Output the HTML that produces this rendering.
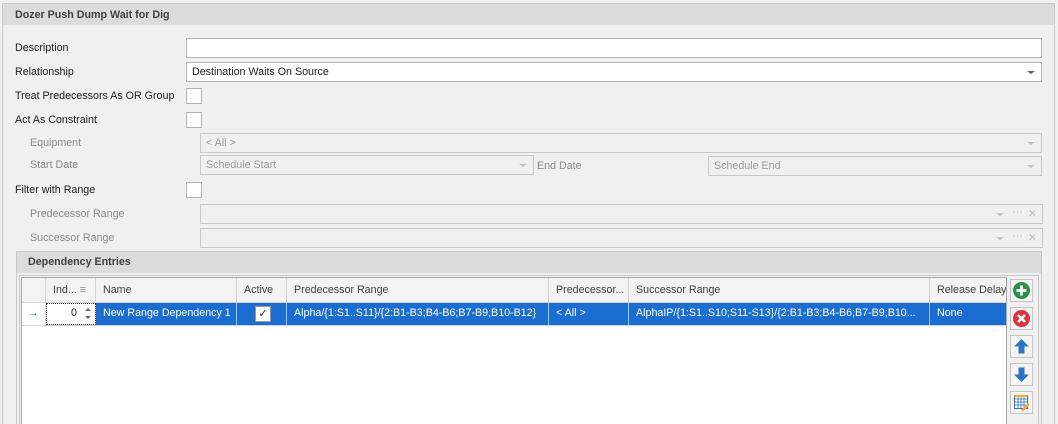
<!DOCTYPE html>
<html><head><style>
body{margin:0;width:1058px;height:424px;background:#f0f0f0;font-family:"Liberation Sans",sans-serif;font-size:10.7px;color:#202020;position:relative;overflow:hidden}
.a{position:absolute;white-space:nowrap}
.box{position:absolute;border:1px solid #b4b4b4;background:#fff;box-sizing:border-box}
.dis{background:#f0f0f0;border-color:#c8c8c8;color:#9a9a9a}
.lbl{position:absolute;white-space:nowrap;line-height:14px}
.sub{color:#8a8a8a}
.arr{position:absolute;right:6px;top:8px;width:0;height:0;border-left:4px solid transparent;border-right:4px solid transparent;border-top:3px solid #606060}
.dis .arr{border-top-color:#c0c0c0}
.cell{position:absolute;top:0;height:100%;box-sizing:border-box;border-right:1px solid #d4d4d4;padding-left:7px;line-height:24px;overflow:hidden;white-space:nowrap}
.btn{position:absolute;left:1010px;width:23px;height:23px;box-sizing:border-box;border:1px solid #c4c4c4;background:#f4f4f4}
.btn svg{position:absolute;left:0;top:0}
</style></head><body>
<div class="a" style="left:2px;top:3px;width:1053px;height:421px;border:1px solid #cacaca;border-bottom:none;box-sizing:border-box"></div>
<div class="a" style="left:3px;top:4px;width:1051px;height:21px;background:#dcdcdc"></div>
<div class="lbl" style="left:15px;top:8px;font-weight:bold;color:#404040">Dozer Push Dump Wait for Dig</div>

<div class="lbl" style="left:15px;top:41px">Description</div>
<div class="box" style="left:186px;top:38px;width:856px;height:20px"></div>
<div class="lbl" style="left:15px;top:65px">Relationship</div>
<div class="box" style="left:186px;top:62px;width:856px;height:20px"><span class="a" style="left:5px;top:3px">Destination Waits On Source</span><div class="arr"></div></div>
<div class="lbl" style="left:15px;top:89px">Treat Predecessors As OR Group</div>
<div class="box" style="left:186px;top:88px;width:16px;height:16px"></div>
<div class="lbl" style="left:15px;top:113px">Act As Constraint</div>
<div class="box" style="left:186px;top:112px;width:16px;height:16px"></div>

<div class="lbl sub" style="left:30px;top:136px">Equipment</div>
<div class="box dis" style="left:200px;top:133px;width:842px;height:20px"><span class="a" style="left:5px;top:3px">&lt; All &gt;</span><div class="arr"></div></div>
<div class="lbl sub" style="left:30px;top:158px">Start Date</div>
<div class="box dis" style="left:200px;top:155px;width:334px;height:20px"><span class="a" style="left:5px;top:3px">Schedule Start</span><div class="arr"></div></div>
<div class="lbl sub" style="left:537px;top:159px">End Date</div>
<div class="box dis" style="left:708px;top:156px;width:334px;height:20px"><span class="a" style="left:5px;top:3px">Schedule End</span><div class="arr"></div></div>

<div class="lbl" style="left:15px;top:183px">Filter with Range</div>
<div class="box" style="left:186px;top:182px;width:16px;height:16px"></div>
<div class="lbl sub" style="left:30px;top:207px">Predecessor Range</div>
<div class="box dis" style="left:200px;top:204px;width:843px;height:20px"><div class="arr" style="right:38px"></div><span class="a" style="right:19px;top:1px;color:#bbb">···</span><span class="a" style="right:5px;top:2px;color:#bbb">✕</span></div>
<div class="lbl sub" style="left:30px;top:231px">Successor Range</div>
<div class="box dis" style="left:200px;top:228px;width:843px;height:20px"><div class="arr" style="right:38px"></div><span class="a" style="right:19px;top:1px;color:#bbb">···</span><span class="a" style="right:5px;top:2px;color:#bbb">✕</span></div>

<div class="a" style="left:16px;top:251px;width:1026px;height:173px;border:1px solid #c8c8c8;border-bottom:none;box-sizing:border-box"></div>
<div class="a" style="left:17px;top:252px;width:1024px;height:21px;background:#dcdcdc"></div>
<div class="lbl" style="left:28px;top:255px;font-weight:bold;color:#404040">Dependency Entries</div>
<div class="a" style="left:19px;top:275px;width:1020px;height:149px;border:1px solid #c8c8c8;border-bottom:none;box-sizing:border-box"></div>

<div class="a" style="left:21px;top:277px;width:986px;height:147px;background:#fff;border:1px solid #a8a8a8;border-bottom:none;box-sizing:border-box"></div>
<div class="a" style="left:22px;top:278px;width:984px;height:25px;background:#f3f3f3;border-bottom:1px solid #d4d4d4;box-sizing:border-box;color:#404040">
<div class="cell" style="left:0;width:24px"></div>
<div class="cell" style="left:24px;width:50px">Ind... <span style="color:#888">≡</span></div>
<div class="cell" style="left:74px;width:141px">Name</div>
<div class="cell" style="left:215px;width:50px">Active</div>
<div class="cell" style="left:265px;width:262px">Predecessor Range</div>
<div class="cell" style="left:527px;width:80px">Predecessor...</div>
<div class="cell" style="left:607px;width:301px">Successor Range</div>
<div class="cell" style="left:908px;width:76px;border-right:none">Release Delay</div>
</div>
<div class="a" style="left:22px;top:303px;width:984px;height:23px;border-bottom:1px solid #d4d4d4;box-sizing:border-box;color:#fff">
<div class="cell" style="left:0;width:24px;background:#fff;color:#1e6fd0;line-height:21px;padding-left:6px">→</div>
<div class="cell" style="left:24px;width:50px;background:#fff;color:#202020;outline:1px dotted #333;outline-offset:-1px;line-height:21px;text-align:right;padding-right:18px">0
<div class="a" style="left:39px;top:5px;width:0;height:0;border-left:3px solid transparent;border-right:3px solid transparent;border-bottom:3px solid #666"></div>
<div class="a" style="left:39px;top:13px;width:0;height:0;border-left:3px solid transparent;border-right:3px solid transparent;border-top:3px solid #666"></div></div>
<div class="cell" style="left:74px;width:141px;background:#1c6dd0;line-height:21px;border-right-color:#9cc0ec">New Range Dependency 1</div>
<div class="cell" style="left:215px;width:50px;background:#1c6dd0;border-right-color:#9cc0ec"><div class="a" style="left:18px;top:3px;width:14px;height:14px;background:#fff;border:1px solid #999;color:#333;font-size:11px;line-height:14px;text-align:center">✓</div></div>
<div class="cell" style="left:265px;width:262px;background:#1c6dd0;line-height:21px;border-right-color:#9cc0ec">Alpha/{1:S1..S11}/{2:B1-B3;B4-B6;B7-B9;B10-B12}</div>
<div class="cell" style="left:527px;width:80px;background:#1c6dd0;line-height:21px;border-right-color:#9cc0ec">&lt; All &gt;</div>
<div class="cell" style="left:607px;width:301px;background:#1c6dd0;line-height:21px;border-right-color:#9cc0ec">AlphaIP/{1:S1..S10;S11-S13}/{2:B1-B3;B4-B6;B7-B9;B10...</div>
<div class="cell" style="left:908px;width:76px;background:#1c6dd0;line-height:21px;border-right:none">None</div>
</div>

<div class="btn" style="top:279px"><svg width="21" height="21"><circle cx="10.5" cy="10.5" r="8.5" fill="#2d8f4a"/><path d="M5.5 10.5h10M10.5 5.5v10" stroke="#fff" stroke-width="2.8"/></svg></div>
<div class="btn" style="top:307px"><svg width="21" height="21"><circle cx="10.5" cy="10.5" r="8.5" fill="#e0303a"/><path d="M7 7l7 7M14 7l-7 7" stroke="#fff" stroke-width="2.6"/></svg></div>
<div class="btn" style="top:335px"><svg width="21" height="21"><path d="M10.5 3l7.5 7.5h-4.5v7h-6v-7h-4.5z" fill="#2f72c4"/></svg></div>
<div class="btn" style="top:363px"><svg width="21" height="21"><path d="M10.5 18l7.5-7.5h-4.5v-7h-6v7h-4.5z" fill="#2f72c4"/></svg></div>
<div class="btn" style="top:391px"><svg width="21" height="21"><rect x="3.5" y="3.5" width="13" height="13" fill="#fff" stroke="#2f72c4"/><path d="M3.5 7h13M3.5 10h13M3.5 13h13M7 3.5v13M10 3.5v13M13 3.5v13" stroke="#2f72c4" stroke-width="0.8"/><rect x="3.5" y="3" width="13" height="2" fill="#f2b01e"/><path d="M10 18l7-7 1.8 1.8-7 7z" fill="#f2b01e"/></svg></div>
</body></html>
